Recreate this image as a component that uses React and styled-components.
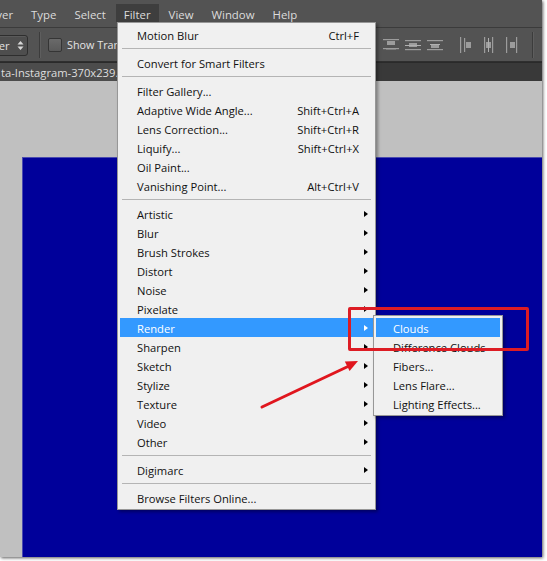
import React from 'react';
import styled, { createGlobalStyle } from 'styled-components';

const Global = createGlobalStyle`
  html, body { margin: 0; padding: 0; background: #ffffff; }
  body { width: 547px; height: 561px; overflow: hidden; }
  * { box-sizing: border-box; }
`;

const Frame = styled.div`
  position: relative;
  width: 542px;
  height: 557px;
  display: flex;
  flex-direction: column;
  overflow: hidden;
  background: #535353;
  box-shadow: 1px 1px 3px rgba(0, 0, 0, 0.65);
  font-family: "Open Sans", "Noto Sans", sans-serif;
  font-size: 11.2px;
`;

const MenuBar = styled.div`
  height: 28px;
  padding-top: 4px;
  display: flex;
  align-items: flex-start;
  gap: 2px;
  border-bottom: 1px solid #3b3b3b;
  margin-left: -24px;
`;

const MenuBarItem = styled.div`
  height: 18px;
  line-height: 21px;
  padding: 0 8px;
  color: #dcdcdc;
  font-size: 11.4px;
  background: ${(p) => (p.$open ? '#3e3e3e' : 'transparent')};
`;

const Toolbar = styled.div`
  height: 34px;
  display: flex;
  align-items: center;
  border-bottom: 1px solid #2f2f2f;
`;

const SelectBox = styled.div`
  width: 50px;
  height: 21px;
  margin-left: -22px;
  margin-top: 1px;
  display: flex;
  align-items: center;
  justify-content: space-between;
  padding: 0 3px 0 2px;
  color: #e2e2e2;
  background: #4e4e4e;
  border: 1px solid #2e2e2e;
  border-radius: 3px;
  box-shadow: inset 0 1px 0 #5a5a5a;
`;

const VSep = styled.div`
  width: 1px;
  height: 26px;
  background: #3c3c3c;
  box-shadow: 1px 0 0 #5e5e5e;
  margin: ${(p) => p.$m || '0'};
`;

const CheckBox = styled.div`
  width: 14px;
  height: 14px;
  border-radius: 2px;
  border: 1px solid #353535;
  background: linear-gradient(#6a6a6a, #5a5a5a);
  margin-left: 8px;
`;

const ToolLabel = styled.span`
  margin-left: 5px;
  color: #e4e4e4;
  font-size: 10.8px;
  white-space: nowrap;
`;

const RightTools = styled.div`
  margin-left: auto;
  display: flex;
  align-items: center;
`;

const IconGroup = styled.div`
  display: flex;
  align-items: center;
  gap: ${(p) => p.$gap || 5}px;
  margin-right: ${(p) => p.$mr || 0}px;
`;

const TabBar = styled.div`
  height: 19px;
  display: flex;
  background: #393939;
  border-top: 1px solid #2a2a2a;
`;

const Tab = styled.div`
  padding: 0 12px 0 1px;
  line-height: 19px;
  background: #4c4c4c;
  color: #dedede;
  font-size: 11.2px;
  white-space: nowrap;
`;

const Workspace = styled.div`
  flex: 1;
  display: flex;
  background: #c0c0c0;
  padding: 77px 0 0 23px;
`;

const Canvas = styled.div`
  flex: 1;
  background: #00009a;
  box-shadow: 0 0 0 1px #4a4ab0;
`;

const Menu = styled.div`
  position: absolute;
  left: ${(p) => p.$left}px;
  top: ${(p) => p.$top}px;
  width: ${(p) => p.$width}px;
  padding: 2px;
  background: #f0f0f0;
  border: 1px solid #979797;
  box-shadow: 2px 2px 3px rgba(0, 0, 0, 0.35);
  color: #000;
  z-index: ${(p) => p.$z || 5};
`;

const Item = styled.div`
  position: relative;
  height: 19px;
  display: grid;
  grid-template-columns: 1fr auto 14px;
  align-items: center;
  padding: 2px 0 0 17px;
  white-space: nowrap;
  background: ${(p) => (p.$active ? '#3399ff' : 'transparent')};
  color: ${(p) => (p.$active ? '#ffffff' : '#111111')};
`;

const Shortcut = styled.span`
  text-align: right;
`;

const SubArrow = styled.span`
  justify-self: center;
  margin-top: -2px;
  width: 0;
  height: 0;
  border-left: 4px solid ${(p) => (p.$active ? '#ffffff' : '#000000')};
  border-top: 3.5px solid transparent;
  border-bottom: 3.5px solid transparent;
`;

const Separator = styled.div`
  height: 9px;
  display: flex;
  align-items: center;
  padding: 0 2px;
  &::after {
    content: '';
    flex: 1;
    height: 1px;
    background: #b4b4b4;
  }
`;

const SubMenu = styled(Menu)`
  left: 100%;
  top: -3px;
`;

const Highlight = styled.div`
  position: absolute;
  left: 348px;
  top: 307px;
  width: 181px;
  height: 44px;
  border: 3px solid #dd1c24;
  border-radius: 2px;
  z-index: 20;
  pointer-events: none;
`;

const Overlay = styled.svg`
  position: absolute;
  left: 0;
  top: 0;
  z-index: 21;
  pointer-events: none;
`;

const AlignH = ({ v }) => (
  <svg width="18" height="18" viewBox="0 0 18 18">
    {v === 0 && (
      <g fill="#9c9c9c">
        <rect x="1" y="3" width="16" height="1.2" />
        <rect x="5" y="5" width="8" height="4" />
        <rect x="1" y="12" width="16" height="1.2" />
        <rect x="4" y="13" width="10" height="1" fill="#7c7c7c" />
      </g>
    )}
    {v === 1 && (
      <g fill="#9c9c9c">
        <rect x="1" y="4" width="16" height="1.2" />
        <rect x="5" y="7" width="8" height="4" />
        <rect x="1" y="9" width="16" height="1" fill="#b0b0b0" />
        <rect x="1" y="13" width="16" height="1.2" />
      </g>
    )}
    {v === 2 && (
      <g fill="#9c9c9c">
        <rect x="1" y="4" width="16" height="1.2" />
        <rect x="5" y="8" width="8" height="4" />
        <rect x="4" y="8" width="10" height="1" fill="#b0b0b0" />
        <rect x="1" y="13" width="16" height="1.2" />
      </g>
    )}
  </svg>
);

const AlignV = ({ v }) => (
  <svg width="16" height="18" viewBox="0 0 16 18">
    {v === 0 && (
      <g fill="#9c9c9c">
        <rect x="2" y="1" width="1.2" height="16" />
        <rect x="6" y="2" width="1.2" height="14" />
        <rect x="8" y="6" width="5" height="6" />
      </g>
    )}
    {v === 1 && (
      <g fill="#9c9c9c">
        <rect x="3" y="1" width="1.2" height="16" />
        <rect x="5" y="6" width="5" height="6" />
        <rect x="7" y="2" width="1" height="14" fill="#b0b0b0" />
        <rect x="11" y="1" width="1.2" height="16" />
      </g>
    )}
    {v === 2 && (
      <g fill="#9c9c9c">
        <rect x="2" y="1" width="1.2" height="16" />
        <rect x="6" y="6" width="5" height="6" />
        <rect x="12" y="1" width="1.2" height="16" />
      </g>
    )}
  </svg>
);

const UpDown = () => (
  <svg width="7" height="11" viewBox="0 0 7 11">
    <path d="M3.5 1 L6.5 4.5 H0.5 Z M3.5 10 L6.5 6.5 H0.5 Z" fill="#d8d8d8" />
  </svg>
);

const topMenu = [
  { label: 'Motion Blur', sc: 'Ctrl+F' },
  'sep',
  { label: 'Convert for Smart Filters' },
  'sep',
  { label: 'Filter Gallery...' },
  { label: 'Adaptive Wide Angle...', sc: 'Shift+Ctrl+A' },
  { label: 'Lens Correction...', sc: 'Shift+Ctrl+R' },
  { label: 'Liquify...', sc: 'Shift+Ctrl+X' },
  { label: 'Oil Paint...' },
  { label: 'Vanishing Point...', sc: 'Alt+Ctrl+V' },
  'sep',
  { label: 'Artistic', sub: true },
  { label: 'Blur', sub: true },
  { label: 'Brush Strokes', sub: true },
  { label: 'Distort', sub: true },
  { label: 'Noise', sub: true },
  { label: 'Pixelate', sub: true },
  { label: 'Render', sub: true, active: true, open: true },
  { label: 'Sharpen', sub: true },
  { label: 'Sketch', sub: true },
  { label: 'Stylize', sub: true },
  { label: 'Texture', sub: true },
  { label: 'Video', sub: true },
  { label: 'Other', sub: true },
  'sep',
  { label: 'Digimarc', sub: true },
  'sep',
  { label: 'Browse Filters Online...' },
];

const renderMenu = ['Clouds', 'Difference Clouds', 'Fibers...', 'Lens Flare...', 'Lighting Effects...'];

export default function App() {
  return (
    <>
      <Global />
      <Frame>
        <MenuBar>
          <MenuBarItem>Layer</MenuBarItem>
          <MenuBarItem>Type</MenuBarItem>
          <MenuBarItem>Select</MenuBarItem>
          <MenuBarItem $open>Filter</MenuBarItem>
          <MenuBarItem>View</MenuBarItem>
          <MenuBarItem>Window</MenuBarItem>
          <MenuBarItem>Help</MenuBarItem>
        </MenuBar>
        <Toolbar>
          <SelectBox>
            <span>Layer</span>
            <UpDown />
          </SelectBox>
          <VSep $m="0 0 0 11px" />
          <CheckBox />
          <ToolLabel>Show Transform Controls</ToolLabel>
          <RightTools>
            <IconGroup $gap={4} $mr={14}>
              <AlignH v={0} />
              <AlignH v={1} />
              <AlignH v={2} />
            </IconGroup>
            <IconGroup $gap={7} $mr={12}>
              <AlignV v={0} />
              <AlignV v={1} />
              <AlignV v={2} />
            </IconGroup>
            <VSep $m="0 9px 0 0" />
          </RightTools>
        </Toolbar>
        <TabBar>
          <Tab>ta-Instagram-370x239.jpg @ 100% (RGB/8)</Tab>
        </TabBar>
        <Workspace>
          <Canvas />
        </Workspace>

        <Menu $left={117} $top={22} $width={259}>
          {topMenu.map((it, i) =>
            it === 'sep' ? (
              <Separator key={i} />
            ) : (
              <Item key={i} $active={it.active}>
                <span>{it.label}</span>
                <Shortcut>{it.sc || ''}</Shortcut>
                {it.sub ? <SubArrow $active={it.active} /> : <span />}
                {it.open && (
                  <SubMenu $width={130} $z={6}>
                    {renderMenu.map((s, j) => (
                      <Item key={s} $active={j === 0}>
                        <span>{s}</span>
                        <span />
                        <span />
                      </Item>
                    ))}
                  </SubMenu>
                )}
              </Item>
            )
          )}
        </Menu>

        <Highlight />
        <Overlay width="542" height="557" viewBox="0 0 542 557">
          <line x1="262" y1="407" x2="349" y2="366" stroke="#e0161e" strokeWidth="3" strokeLinecap="round" />
          <polygon points="358,361 349.6,371 344.8,361.5" fill="#e0161e" />
        </Overlay>
      </Frame>
    </>
  );
}
